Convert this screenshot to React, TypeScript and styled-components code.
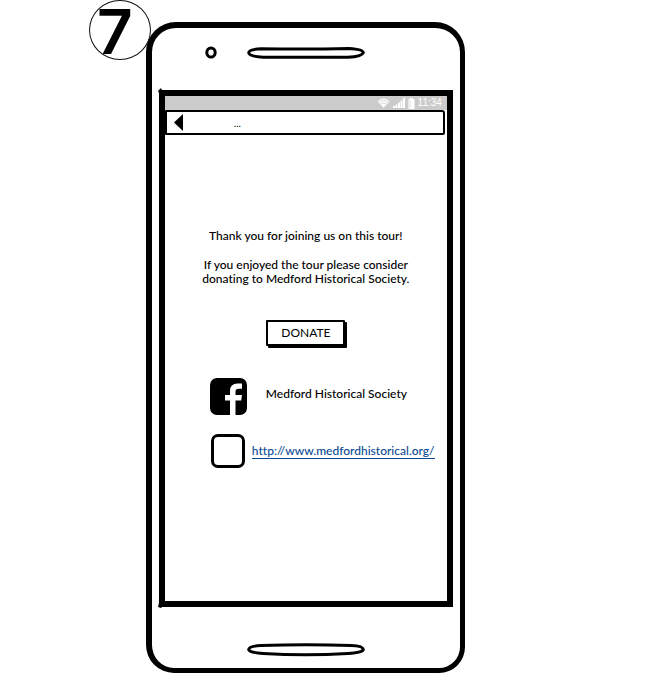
import React from "react";
import styled, { createGlobalStyle } from "styled-components";

const GlobalStyle = createGlobalStyle`
  *, *::before, *::after { box-sizing: border-box; }
  body {
    margin: 0;
    background: #fff;
    color: #000;
    font-family: Lato, sans-serif;
    font-variant-ligatures: none;
  }
`;

const Page = styled.main`
  padding: 22px 22% 4px;
`;

const Phone = styled.section`
  position: relative;
  display: flex;
  flex-direction: column;
  width: 100%;
  min-width: 319px;
  max-width: 319px;
  border: solid #000;
  border-width: 6px 5px 5px 6px;
  border-radius: 30px 30px 26px 28px;
`;

const StepBadge = styled.div`
  position: absolute;
  top: -28px;
  left: -63px;
  display: flex;
  justify-content: center;
  width: 62px;
  height: 60px;
  padding-right: 10px;
  border: 1px solid #111;
  border-radius: 50%;
  font: 600 62px/62px Inter, sans-serif;
`;

const Hardware = styled.div`
  display: grid;
  grid-template-columns: 1fr 118px 1fr;
  align-items: center;

  svg { display: block; fill: none; stroke: #000; }
`;

const TopHardware = styled(Hardware)`
  padding: 18px 0 31px;
`;

const BottomHardware = styled(Hardware)`
  padding: 36px 0 11px;
`;

const Camera = styled.svg`
  justify-self: end;
  margin-right: 30px;
`;

const Speaker = styled.svg`
  grid-column: 2;
`;

const Screen = styled.div`
  position: relative;
  display: flex;
  flex-direction: column;
  margin: 0 7px;
  border: 6px solid #000;
`;

const CornerTick = styled.svg<{ $end?: boolean }>`
  position: absolute;
  left: -8px;
  ${(p) => (p.$end ? "bottom: -8px;" : "top: -9px;")}
`;

const StatusBar = styled.div`
  display: flex;
  align-items: center;
  justify-content: flex-end;
  gap: 3px;
  height: 14px;
  padding-right: 5px;
  background: #cbcbcb;
  color: #fff;
  font: 10px/14px "Liberation Sans", sans-serif;

  svg { display: block; }
`;

const NavBar = styled.header`
  display: flex;
  align-items: center;
  height: 25px;
  margin-right: 2px;
  padding-left: 7px;
  border: 2px solid #000;
  border-radius: 1px 3px 2px 1px;
  font-size: 10px;
`;

const BackButton = styled.button`
  display: flex;
  width: 60px;
  padding: 0;
  border: 0;
  background: none;
  cursor: pointer;
`;

const Content = styled.div`
  display: flex;
  flex-direction: column;
  align-items: center;
  padding: 94px 0 133px;
  font-size: 12px;
  line-height: 14px;
  font-weight: 500;
`;

const Message = styled.p`
  margin: 0 0 15px;
  text-align: center;
`;

const DonateButton = styled.button`
  height: 26px;
  margin-top: 19px;
  padding: 0 13px;
  border: 2px solid #000;
  border-radius: 1px;
  background: #fff;
  box-shadow: 2px 2px 0 #000;
  color: #000;
  font: 12px/14px Lato, sans-serif;
  cursor: pointer;
`;

const Links = styled.div`
  display: flex;
  flex-direction: column;
  gap: 19px;
  align-self: stretch;
  margin-top: 32px;
  padding-left: 45px;
`;

const FacebookRow = styled.div`
  display: flex;
  gap: 19px;
  line-height: 32px;
`;

const SiteRow = styled.div`
  display: flex;
  align-items: center;
  gap: 7px;
`;

const SiteCheckbox = styled.input`
  appearance: none;
  width: 34px;
  height: 34px;
  margin: 0 0 0 1px;
  border: 3px solid #000;
  border-radius: 7px;
  background: #fff;

  &:checked { background: #000; }
`;

const SiteLink = styled.a`
  border-bottom: 1px solid #0b4a92;
  color: #0b4a92;
  text-decoration: none;
`;

export default function App() {
  return (
    <>
      <GlobalStyle />
      <Page>
        <Phone>
          <StepBadge>7</StepBadge>
          <TopHardware>
            <Camera width="12" height="13" viewBox="0 0 12 13">
              <ellipse cx="6" cy="6.5" rx="4.2" ry="4.6" strokeWidth="3" />
            </Camera>
            <Speaker width="118" height="12" viewBox="0 0 118 12">
              <path d="M14 1.800Q58 2.500 102 1.600Q116 2.500 116.300 5.700Q115 9.500 101 10.200H16Q2 9.500 1.700 5.700Q2 2.300 14 1.800Z" strokeWidth="3" />
            </Speaker>
          </TopHardware>

          <Screen>
            <CornerTick width="8" height="8" viewBox="0 0 8 8" aria-hidden="true">
              <path d="M4 1l1 2v4L2 6 1 4Z" />
            </CornerTick>
            <StatusBar>
              <svg width="13" height="10" viewBox="0 0 13 10" aria-label="Wi-Fi">
                <path d="M0.500 3.200Q6.500-2.200 12.500 3.200L6.500 9.800Z" fill="#fff" />
                <path d="M2 4.200Q6.500.7 11 4.200M3.600 6Q6.500 3.800 9.400 6" fill="none" stroke="#cbcbcb" strokeWidth=".8" />
              </svg>
              <svg width="12" height="10" viewBox="0 0 12 10" fill="#fff" aria-label="Signal">
                <path d="M0 8h2v2H0zM2.500 6.500h2V10h-2zM5 4.500h2V10H5zM7.500 2.500h2V10h-2zM10 0h2v10h-2z" />
              </svg>
              <svg width="7" height="11" viewBox="0 0 7 11" fill="#fff" aria-label="Battery">
                <path d="M2 0h3v1h1.500v10h-6V1H2z" />
                <path d="M2.200 2.500v7" stroke="#ddd" />
              </svg>
              <time>11:34</time>
            </StatusBar>

            <NavBar>
              <BackButton aria-label="Back">
                <svg width="9" height="17" viewBox="0 0 9 17">
                  <path d="M9 0v17L0 8.500Z" />
                </svg>
              </BackButton>
              <span>...</span>
            </NavBar>

            <Content>
              <Message>Thank you for joining us on this tour!</Message>
              <Message>
                If you enjoyed the tour please consider
                <br />
                donating to Medford Historical Society.
              </Message>
              <DonateButton>DONATE</DonateButton>
              <Links>
                <FacebookRow>
                  <svg width="37" height="37" viewBox="0 0 37 37" aria-label="Facebook">
                    <rect width="37" height="37" rx="7" />
                    <path d="M20 37V22.500H15V17H20V13Q20 5.500 27.500 5.500H32V10.800H28.500Q25.500 10.800 25.500 13.500V17H32L31.200 22.500H25.500V37Z" fill="#fff" />
                  </svg>
                  <span>Medford Historical Society</span>
                </FacebookRow>
                <SiteRow>
                  <SiteCheckbox type="checkbox" aria-labelledby="site-link" />
                  <SiteLink id="site-link" href="http://www.medfordhistorical.org/">
                    http://www.medfordhistorical.org/
                  </SiteLink>
                </SiteRow>
              </Links>
            </Content>
            <CornerTick $end width="8" height="8" viewBox="0 0 8 8" aria-hidden="true">
              <path d="M2 2l3-1v5L4 7 1 6Z" />
            </CornerTick>
          </Screen>

          <BottomHardware>
            <Speaker width="118" height="14" viewBox="0 0 118 14">
              <path d="M14 2.600Q60 1 104 2.600Q116 3 116.300 6.500Q116 9.500 101 10.500Q59 13.200 16 10.500Q2 9.500 1.700 6.500Q2 3 14 2.600Z" strokeWidth="3" />
            </Speaker>
          </BottomHardware>
        </Phone>
      </Page>
    </>
  );
}
